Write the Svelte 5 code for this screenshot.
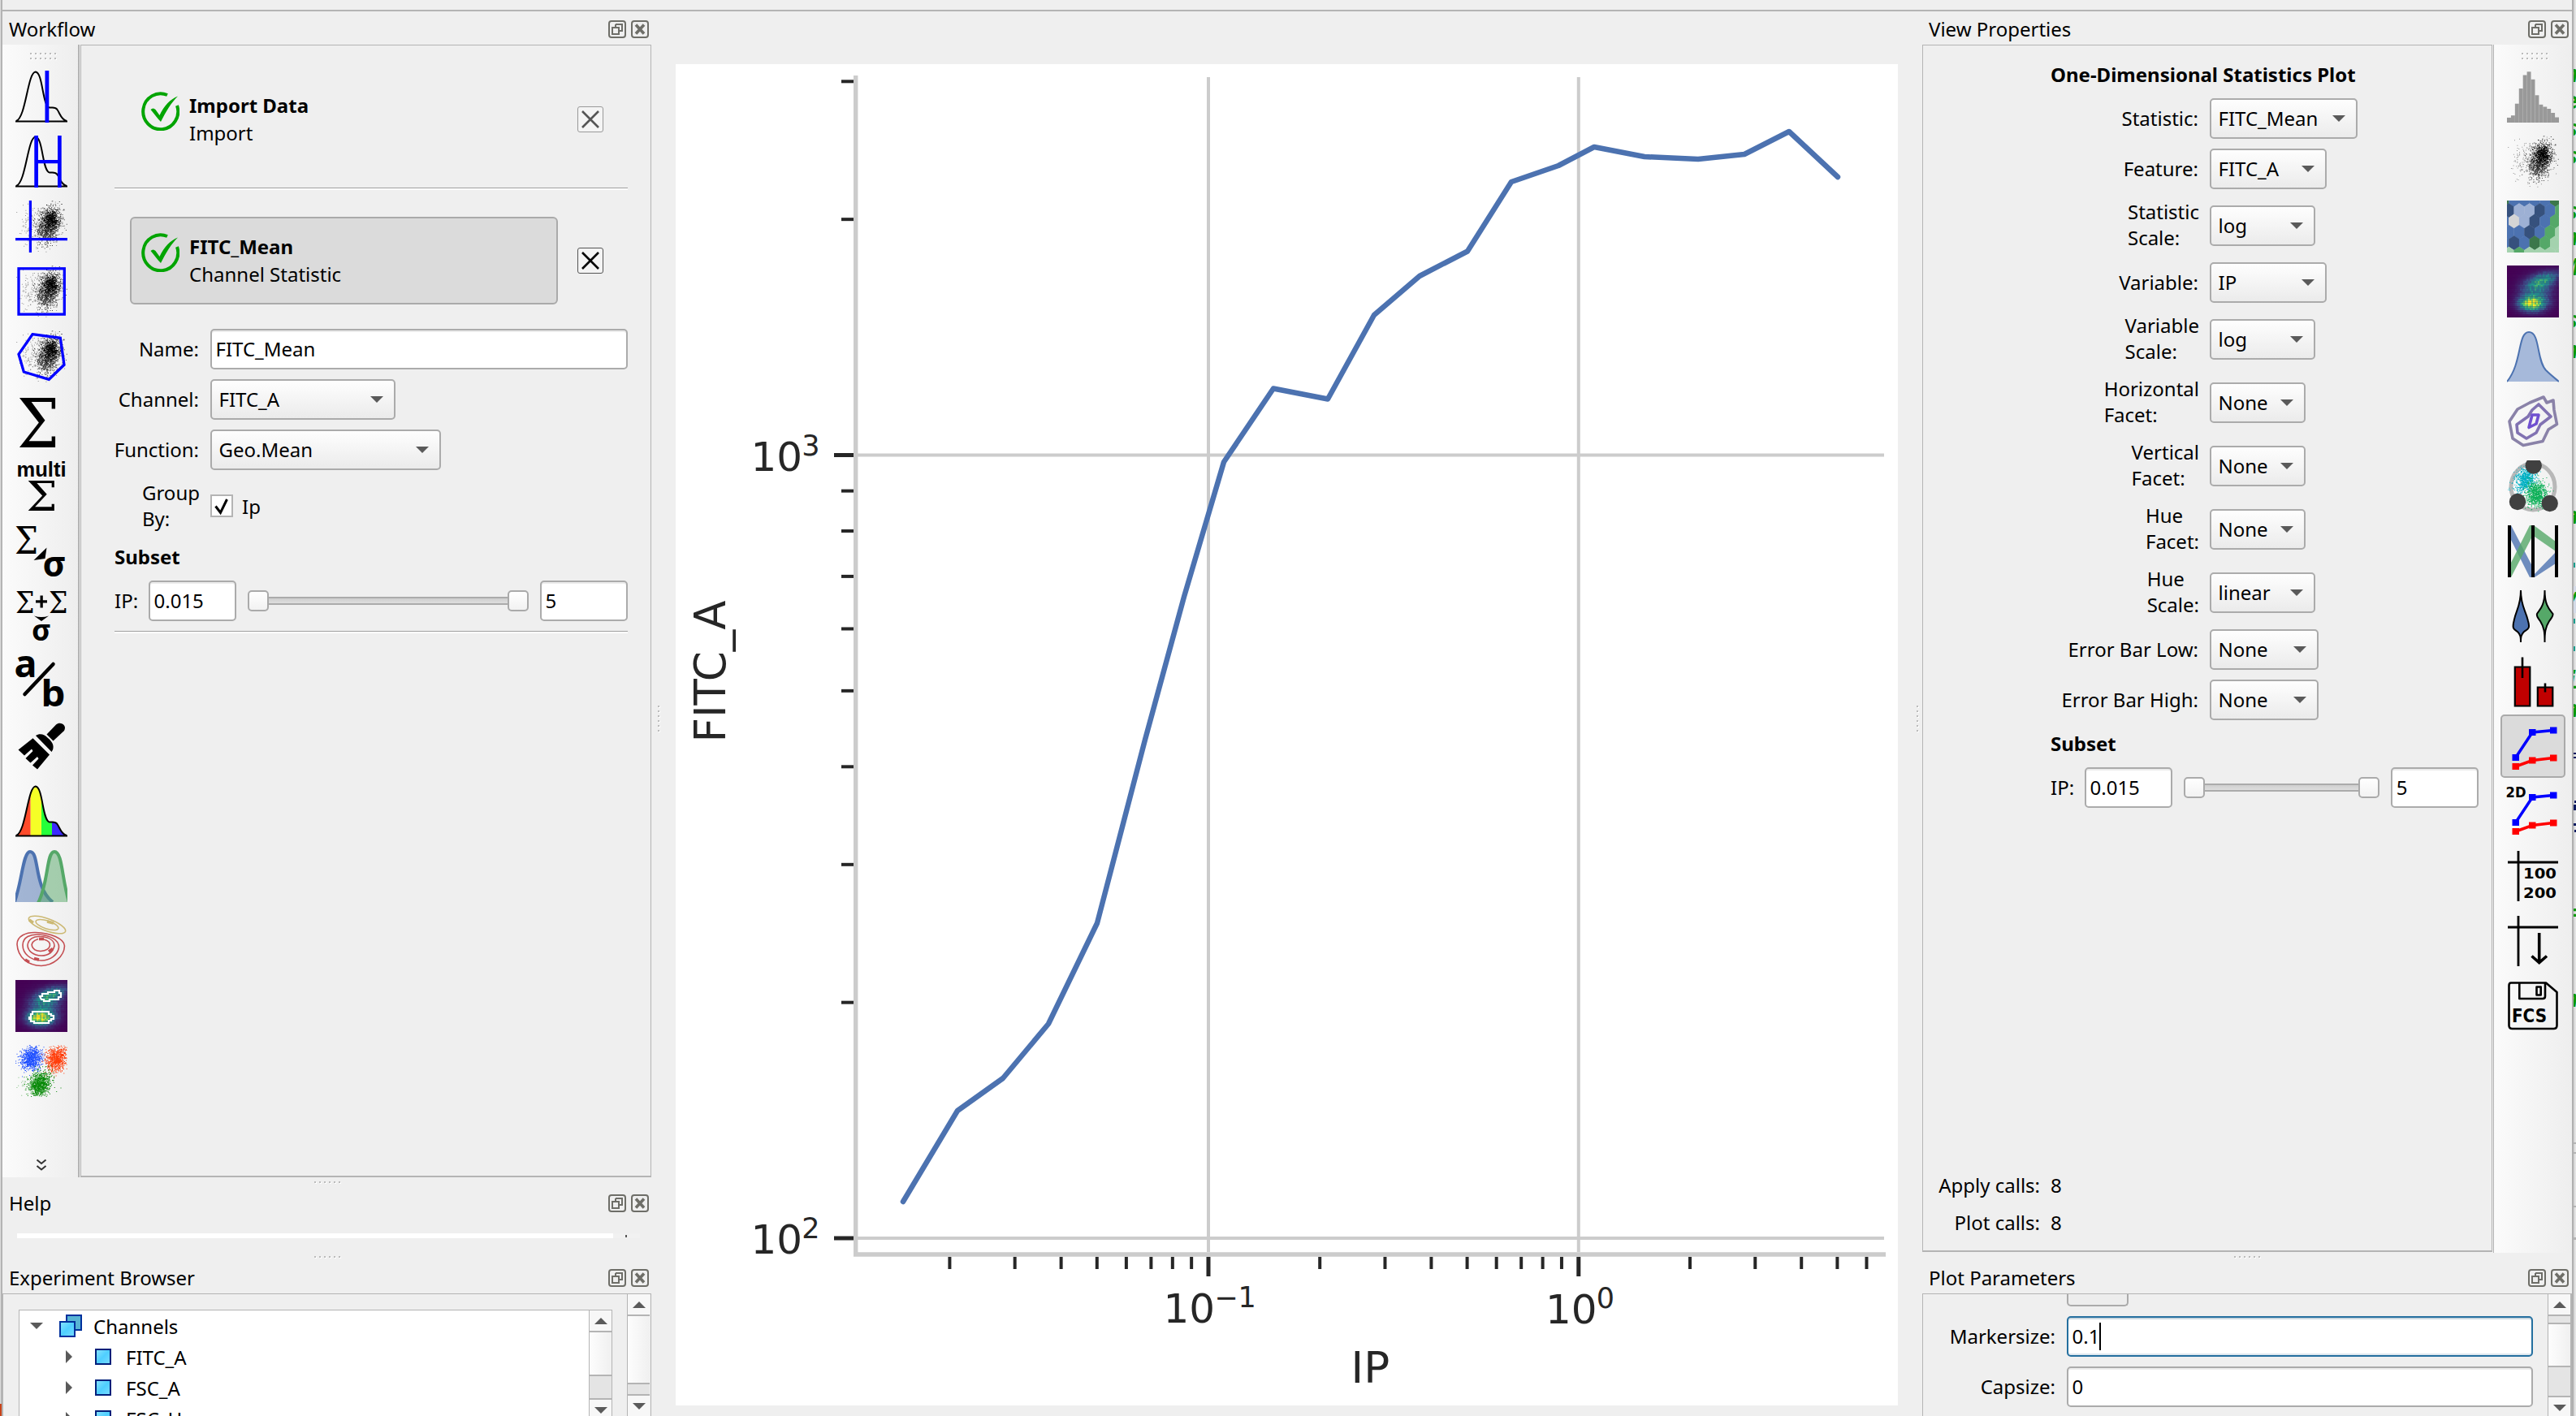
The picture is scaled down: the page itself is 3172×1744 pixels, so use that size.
<script>
  // Small deterministic generator, keeps the scatter icons stable between renders
  function rng(seed) {
    let s = seed;
    return () => {
      s = (s * 1664525 + 1013904223) % 4294967296;
      return s / 4294967296;
    };
  }

  function cloud(seed, n, cx, cy, sx, sy, tilt = 0, size = 1) {
    const r = rng(seed);
    let d = '';
    for (let i = 0; i < n; i++) {
      const m = Math.sqrt(-2 * Math.log(r() + 1e-6));
      const a = 2 * Math.PI * r();
      const v = m * Math.sin(a);
      const x = cx + m * Math.cos(a) * sx - v * tilt;
      const y = cy + v * sy;
      if (x < 0 || x > 63 || y < 0 || y > 63) continue;
      d += `M${x.toFixed(1)} ${y.toFixed(1)}h${size}v${size}h-${size}z`;
    }
    return d;
  }

  const mainCloud = cloud(7, 700, 40.5, 29, 7.2, 10.5, 1.2) + cloud(8, 180, 37, 41, 4.5, 5);
  const coreCloud = cloud(23, 420, 43, 24, 4.8, 6.5, 0.8);
  const strayCloud = cloud(51, 260, 30, 30, 14, 12, 0);

  const viridis = [[68, 1, 84], [59, 82, 139], [33, 145, 140], [94, 201, 98], [253, 231, 37]];
  function heatColor(t) {
    const p = Math.max(0, Math.min(0.999, t)) * 4;
    const i = Math.floor(p);
    const c = viridis[i].map((v, k) => Math.round(v + (viridis[i + 1][k] - v) * (p - i)));
    return `rgb(${c.join(',')})`;
  }
  const heat = [];
  const hr = rng(99);
  for (let y = 0; y < 27; y++) {
    for (let x = 0; x < 32; x++) {
      const px = x * 2 + 1, py = y * 2.4 + 1;
      const low = 0.8 * Math.exp(-(((px - 30) / 15) ** 2) - ((py - 47) / 8.5) ** 2);
      const high = 0.5 * Math.exp(-(((px - 45) / 18) ** 2) - ((py - 18 + (px - 45) * 0.3) / 9) ** 2);
      const mid = 0.36 * Math.exp(-(((px - 36) / 19) ** 2) - ((py - 34) / 18) ** 2);
      const t = (low + high + mid) * (0.78 + hr() * 0.4);
      heat.push({ x: x * 2, y: y * 2.4, fill: heatColor(t) });
    }
  }

  const hexFill = { D: '#36517d', B: '#4c72b0', L: '#9db0d4', W: '#d5d5d5', G: '#3c774a', M: '#55a868', P: '#a4d2ae' };
  const hexes = [[-1.2, -4, 'GBBBBG'], [12.2, 2.3, 'DLLDBM'], [25.6, -4, 'BWLDBM'], [38.9, 2.3, 'BBDBMP'], [52.3, -4, 'BDBGMP'], [65.7, 2.3, 'PMPPPP']]
    .flatMap(([y, x0, row]) => [...row].map((k, i) => ({ x: x0 + i * 12.7, y, fill: hexFill[k] })));

  const histTops = [57.9, 55.2, 40.7, 22, 5.5, 1.3, 10.8, 30.3, 41.8, 44.5, 47, 52, 57.5];

  const opIcons = ['threshold', 'range', 'quad', 'rect', 'polygon', 'stat', 'multistat', 'transform', 'frame', 'ratio', 'brush', 'rainbow', 'gauss', 'flow', 'density', 'kmeans'];
  const viewIcons = ['hist', 'scatter', 'hex', 'heat', 'kde', 'contour', 'radviz', 'parallel', 'violin', 'bars', 'line', 'line2d', 'table', 'export', 'fcs'];
  const lettered = ['stat', 'multistat', 'transform', 'frame', 'ratio', 'line2d', 'table', 'fcs'];

  const bell = 'M1 62C13 58 15 2 24.7 1.5C34 2 33 44 42 45.5C46 46 49 44.500 51.500 48C55 53 56 60 63 62';

  const props = [
    ['Statistic:', 'FITC_Mean', 182],
    ['Feature:', 'FITC_A', 144],
    ['Statistic\nScale:', 'log', 130],
    ['Variable:', 'IP', 144],
    ['Variable\nScale:', 'log', 130],
    ['Horizontal\nFacet:', 'None', 118],
    ['Vertical\nFacet:', 'None', 118],
    ['Hue\nFacet:', 'None', 118],
    ['Hue\nScale:', 'linear', 130],
    ['Error Bar Low:', 'None', 134],
    ['Error Bar High:', 'None', 134]
  ];

  // Log-log axes of the plot
  const xAt = v => 1943.8 + 455.8 * Math.log10(v);
  const yAt = v => 560.5 - 964.5 * (Math.log10(v) - 3);
  const xMinor = [];
  for (const e of [0.01, 0.1, 1]) for (let k = 2; k < 10; k++) if (k * e < 6.5) xMinor.push(xAt(k * e));
  const yMinor = [2, 3, 4, 5, 6, 7, 8, 9].map(k => yAt(k * 100)).concat([yAt(2000), yAt(3000)]);
  const series = [
    [1112, 1480], [1179, 1368], [1235, 1328], [1291, 1261], [1351, 1137], [1410, 911], [1458, 735], [1507, 569],
    [1568, 478.5], [1635, 491.5], [1692, 388], [1748, 340], [1807, 309.5], [1861, 224], [1919, 204], [1963, 181],
    [2025, 193], [2091, 196], [2148, 190], [2203, 162], [2263, 218]
  ];

  // Sliver of the editor window lying behind the right edge
  const behind = [
    [101, 'n'], [134, 'e'], [168, 's'], [202, 's'], [270, 's'], [302, 'n'], [339, 'M'], [404, 's'], [441, 'n'],
    [645, 'a'], [745, 'y'], [848, 'i'], [883, 'a'], [1133, '='], [1240, 'n']
  ];
</script>

{#snippet dots(n, rows)}
  <span class="dots" class:two={rows === 2}>
    {#each Array(n * rows) as _}<i></i>{/each}
  </span>
{/snippet}

{#snippet titlebar(text, cls)}
  <header class="titlebar {cls}">
    <span class="grow">{text}</span>
    <svg class="tb" viewBox="0 0 22 22"><rect x="1" y="1" width="20" height="20" rx="3" /><path d="M9 5h8v8h-3M9 8V5M5 9h8v8H5z" /></svg>
    <svg class="tb" viewBox="0 0 22 22"><rect x="1" y="1" width="20" height="20" rx="3" /><path class="thick" d="M6 5.500L16 16.500M16 5.500L6 16.500" /></svg>
  </header>
{/snippet}

{#snippet combo(text, width)}
  <div class="combo" style="width:{width}px">
    <span class="grow">{text}</span>
    <svg class="down" viewBox="0 0 16 8"><path d="M0 0h16l-8 8z" /></svg>
  </div>
{/snippet}

{#snippet subset()}
  <div class="subset">
    <span class="ip">IP:</span>
    <div class="field num">0.015</div>
    <div class="slider"><b></b><u></u><b></b></div>
    <div class="field num">5</div>
  </div>
{/snippet}

{#snippet step(title, sub, active)}
  <div class="step-row">
    <div class="step" class:active>
      <svg class="check" viewBox="0 0 48 48">
        <path class="ring" d="M33 4A21.500 22 0 1 0 45 17" />
        <path d="M12.500 22c2-2 4-2 6 0l5 7C29 17 37 9 46 5.500C38 13 31 25 25 37c-4-4-8-10-12.500-15z" />
      </svg>
      <div class="step-text"><strong>{title}</strong><span>{sub}</span></div>
    </div>
    <div class="xbtn" class:off={!active}><svg viewBox="0 0 28 28"><path d="M4 4L24 24M24 4L4 24" /></svg></div>
  </div>
{/snippet}

{#snippet scatter()}
  <path d={strayCloud} opacity=".4" /><path d={mainCloud} opacity=".7" /><path d={coreCloud} />
{/snippet}

{#snippet heatmap()}
  <rect width="64" height="64" fill="#440154" />
  {#each heat as c}<rect x={c.x} y={c.y} width="2.050" height="2.450" fill={c.fill} />{/each}
{/snippet}

{#snippet lines()}
  <g fill="none" stroke-width="3.500"><path stroke="#00f" d="M10.700 46L31.300 15L57 12.400" /><path stroke="#f00" d="M10.700 57L31.300 49.500L57 46.500" /></g>
  <path fill="#00f" d="M6.500 42h8.500v8H6.500zM27 11h8.500v8H27zM53 8.400h8.500v8H53z" />
  <path fill="#f00" d="M6.500 53h8.500v8H6.500zM27 45.500h8.500v8H27zM53 42.500h8.500v8H53z" />
{/snippet}

{#snippet icon(name)}
  <svg class="icon" class:free={lettered.includes(name)} viewBox="0 0 64 64">
    {#if name === 'threshold'}
      <path class="ink" d="{bell}M0 62.500H64" />
      <path fill="#00f" d="M36.500 0h4.800v64h-4.800z" />
    {:else if name === 'range'}
      <path class="ink" d="{bell}M0 62.500H64" />
      <path fill="#00f" d="M23.300 0H28v64h-4.700zM52 0h4.700v64H52zM25 30h30v4.300H25z" />
    {:else if name === 'quad'}
      {@render scatter()}
      <path fill="#00f" d="M16.800 0H20v64h-3.200zM0 46h64v3.300H0z" />
    {:else if name === 'rect'}
      {@render scatter()}
      <rect x="4" y="3.800" width="56.300" height="56.300" fill="none" stroke="#00f" stroke-width="3.300" />
    {:else if name === 'polygon'}
      {@render scatter()}
      <path fill="none" stroke="#00f" stroke-width="3.300" d="M21 4.700L55.300 9.300L60 42.300L41.300 60.300L10.300 51L4 29.300z" />
    {:else if name === 'stat'}
      <text class="greek" x="2" y="63.500" font-size="84" textLength="52" lengthAdjust="spacingAndGlyphs">Σ</text>
    {:else if name === 'multistat'}
      <text class="helv" x="1.500" y="20" font-size="25" textLength="61" lengthAdjust="spacingAndGlyphs">multi</text>
      <text class="greek" x="13.500" y="62" font-size="51" textLength="38" lengthAdjust="spacingAndGlyphs">Σ</text>
    {:else if name === 'transform'}
      <text class="greek" x="-1" y="35" font-size="46" textLength="29" lengthAdjust="spacingAndGlyphs">Σ</text>
      <path d="M38.500 27.500L36.500 41L22.500 43z" />
      <text class="sans" x="33.500" y="63" font-size="43" textLength="29" lengthAdjust="spacingAndGlyphs">σ</text>
    {:else if name === 'frame'}
      <text class="greek" x="0" y="28" font-size="37" textLength="23.500" lengthAdjust="spacingAndGlyphs">Σ</text>
      <text class="greek" x="41" y="28" font-size="37" textLength="23.500" lengthAdjust="spacingAndGlyphs">Σ</text>
      <path d="M25 12.300h5.500V6.500h3.300v5.800H39v3.300h-5.200v5.800h-3.300v-5.800H25zM23 31.500c6 2 12 2 18 0L32 38z" />
      <text class="sans" x="20" y="62" font-size="35" textLength="24" lengthAdjust="spacingAndGlyphs">σ</text>
    {:else if name === 'ratio'}
      <text class="sans" x="-1.500" y="26.500" font-size="46" textLength="28" lengthAdjust="spacingAndGlyphs">a</text>
      <text class="sans" x="31.500" y="62.500" font-size="45" textLength="30" lengthAdjust="spacingAndGlyphs">b</text>
      <path d="M11.500 48L46.500 11" stroke="#000" stroke-width="4.500" stroke-linecap="round" />
    {:else if name === 'brush'}
      <path d="M38.500 17.500L50 5.500C55 1 64 6 60 13L46.500 25.500z" />
      <path d="M25 19C30 15.500 36 17.500 40 22C45 26 48 31 46 36.500L44.500 39z" />
      <path d="M21.500 22.300L42 42.500L27 60.500L21 55.500L28.500 47.500L27 45L18.500 52.500L12.500 47L21.500 38L20 35.500L11 43.500L3.500 36.500z" />
    {:else if name === 'rainbow'}
      <clipPath id="bell"><path d={bell} /></clipPath>
      <g clip-path="url(#bell)">
        <rect width="18.700" height="64" fill="#ff4b2b" /><rect x="18.700" width="13.300" height="64" fill="#f5ff26" />
        <rect x="32" width="13" height="64" fill="#26ff3b" /><rect x="45" width="19" height="64" fill="#3b2bff" />
      </g>
      <path class="ink" stroke-width="2.600" d="{bell}M0 62.500H64" />
    {:else if name === 'gauss'}
      <path d="M-2 66C8 42 9 2 18 2C30 2 22 46 46 64" fill="#4c72b0" fill-opacity=".5" stroke="#4c72b0" stroke-width="4" />
      <path d="M28 65C41 40 38 2 48 2C58 2 57 36 66 64" fill="#55a868" fill-opacity=".5" stroke="#55a868" stroke-width="4" />
    {:else if name === 'flow'}
      <g fill="none" stroke="#ccb974" stroke-width="1.600"><ellipse cx="39" cy="12" rx="24" ry="7.500" transform="rotate(20 39 12)" /><ellipse cx="39" cy="12" rx="14.500" ry="5" transform="rotate(18 39 12)" /><path stroke-width="3.500" d="M17 6l5 3.500M39 8l8 2" /></g>
      <g fill="none" stroke="#c44e52" stroke-width="1.600">
        <path d="M2 36C2 26 13 21 25 21.500C43 22 60 29 60.500 38C60 51 47 62 32 62.500C15 62 3 52 2 36z" />
        <path d="M9 37C9 27 19 23.500 28 24C42 25 54 30 53.500 40C52 49 43 56 32 56C18 56 9 47 9 37z" />
        <path d="M15 37C16 29 23 26 30 26.500C41 27 48 31 48 38C46 46 40 50 32 50C22 50 15 44 15 37z" />
        <path d="M28 29.500C15 34 20 44 31 44.500C45 43 46 33 35 30" />
        <path stroke-width="3.500" d="M12 55l5 3M23 53.500l6 1.500M41 45l5-3.500M29 29.500h6" />
      </g>
    {:else if name === 'density'}
      {@render heatmap()}
      <path fill="none" stroke="#fff" stroke-width="2.200" d="M30 20h3v-3h7v-2h8v-2h6v3h2v5h-3v3H42v2H35v-2h-3zM17 46h2v-4h2v-3h20v3h3v2h3v4h-3v2h-3v3H23v-2h-4v-3h-2z" />
    {:else if name === 'kmeans'}
      <path fill="#1f4fff" d={cloud(3, 850, 19, 16, 6.5, 7, 1.2)} />
      <path fill="#ff3d0a" d={cloud(5, 850, 50.5, 17, 6, 8, 1.2)} />
      <path fill="#0a8a0a" d={cloud(9, 900, 30, 48, 6.5, 8, 0.8)} />
      <path fill="#0a8a0a" opacity=".5" d={cloud(13, 60, 16, 49, 9, 7)} />
    {:else if name === 'hist'}
      <g fill="#999">{#each histTops as t, i}<rect x={i * 4.92} y={t} width="4.950" height={64 - t} />{/each}</g>
    {:else if name === 'scatter'}
      {@render scatter()}
    {:else if name === 'hex'}
      {#each hexes as h}<path transform="translate({h.x} {h.y})" fill={h.fill} d="M0-9L6.500-4.700V4.700L0 9L-6.500 4.700V-4.700z" />{/each}
    {:else if name === 'heat'}
      {@render heatmap()}
    {:else if name === 'kde'}
      <path d="M0 63C19 40 13 2 27 2C41 2 36 36 48 49C53 54 58 58 64 63" fill="#a6b9da" stroke="#4c72b0" stroke-width="2" />
    {:else if name === 'contour'}
      <g fill="none" stroke-width="3.600" stroke-linejoin="round">
        <path stroke="#8a82a8" d="M3 32L13 17L28 9L45 2L49 9L57 6L58 18L61.500 35.500L51 42L44 56.500L20 61.500L7 53z" />
        <path stroke="#8172b2" d="M12 36L26 26L31 18L39 11L54 26L41 36L36 46L24 53L13 46z" />
        <path stroke="#7050d0" d="M31 24L39 24L36 35L27 39.500z" />
      </g>
    {:else if name === 'radviz'}
      <ellipse cx="32" cy="32.500" rx="27" ry="28.500" fill="none" stroke="#b8b8b8" stroke-width="5" />
      <path fill="#00b0c4" d={cloud(17, 800, 22.5, 23, 6, 8, 2)} />
      <path fill="#0db058" d={cloud(19, 850, 36, 42, 6.5, 8, 0)} />
      <g fill="#404040"><circle cx="32.700" cy="6.500" r="10.200" /><circle cx="13" cy="51" r="10.200" /><circle cx="52.700" cy="53" r="10.200" /></g>
    {:else if name === 'parallel'}
      <path fill="#4c72b0" opacity=".8" d="M5 0L31 50V64H28L5 18zM32 62L60 33V47L34 64z" />
      <path fill="#55a868" opacity=".8" d="M5 64L31 14V0H28L5 46zM33 0L60 20V32L34 14z" />
      <path d="M1 0h4v64H1zM30 0h4v64h-4zM59 0h4v64h-4z" />
    {:else if name === 'violin'}
      <path fill="#4c72b0" stroke="#000" stroke-width="2" d="M17 0C17 20 11 24 8.500 38C6 48 9 48 13 51C17 55 17 58 17 64C17 58 17 55 21 51C25 48 29 48 26 38C23 24 17 20 17 0z" />
      <path fill="#55a868" stroke="#000" stroke-width="2" d="M46.500 0C46.500 20 40 24 37 29C36 32 38 34 41 38C46 46 46.500 52 46.500 64C46.500 52 47 46 52 38C55 34 57 32 56.500 29C53 24 46.500 20 46.500 0z" />
    {:else if name === 'bars'}
      <path fill="#c00000" stroke="#000" stroke-width="2.200" d="M9.800 14.500h18.500v48H9.800zM37.800 39.500h18.500v23H37.800z" />
      <path stroke="#000" stroke-width="2.600" d="M19 2.500V28M47 34.500V45.500" />
    {:else if name === 'line'}
      {@render lines()}
    {:else if name === 'line2d'}
      {@render lines()}
      <text class="dj" x="-1.500" y="14.500" font-size="17.500" textLength="25" lengthAdjust="spacingAndGlyphs">2D</text>
    {:else if name === 'table'}
      <path stroke="#000" stroke-width="2.800" d="M1 15H63M14 1V63" />
      <text class="dj" x="20" y="34.500" font-size="18" textLength="41" lengthAdjust="spacingAndGlyphs">100</text>
      <text class="dj" x="20" y="58.500" font-size="18" textLength="41" lengthAdjust="spacingAndGlyphs">200</text>
    {:else if name === 'export'}
      <path stroke="#000" stroke-width="2.800" d="M1 15H63M14 1V63" />
      <path fill="none" stroke="#000" stroke-width="3.600" d="M39.700 22V58M30.500 50.500L39.700 58.500L49 50.500" />
    {:else if name === 'fcs'}
      <path fill="none" stroke="#000" stroke-width="2.600" stroke-linejoin="round" d="M5 3.500H48L61.500 15V56q0 4-4 4H6.500q-4 0-4-4V7q0-3.500 2.500-3.500zM15.300 4V23H44q3 0 3-3V4M36.500 8.500h5.200v10h-5.200z" />
      <text class="dj" x="6" y="52" font-size="22.500" textLength="43" lengthAdjust="spacingAndGlyphs">FCS</text>
    {/if}
  </svg>
{/snippet}

{#snippet arrow(up)}
  <svg class="sarrow" viewBox="0 0 16 8"><path d={up ? 'M0 8h16L8 0z' : 'M0 0h16l-8 8z'} /></svg>
{/snippet}

<div class="window">
  <div class="edge-left"><i></i></div>
  <div class="main">
    <div class="menu-edge"></div>
    <div class="body">
      <!-- Left docks -->
      <aside class="left">
        {@render titlebar('Workflow', '')}
        <div class="dock ops">
          <nav class="tools">
            <div class="handle">{@render dots(6, 2)}</div>
            {#each opIcons as name}<div class="tool">{@render icon(name)}</div>{/each}
            <svg class="more" viewBox="0 0 14 15"><path d="M1.500 1.500l5.500 4.500l5.500-4.500M1.500 9l5.500 4.500l5.500-4.500" /></svg>
          </nav>
          <section class="panel">
            {@render step('Import Data', 'Import', false)}
            <hr class="first">
            {@render step('FITC_Mean', 'Channel Statistic', true)}
            <div class="form op-form">
              <span class="label">Name:</span><div class="field">FITC_Mean</div>
              <span class="label">Channel:</span>{@render combo('FITC_A', 228)}
              <span class="label">Function:</span>{@render combo('Geo.Mean', 284)}
              <span class="label tall">{'Group\nBy:'}</span>
              <div class="checkline">
                <svg class="box" viewBox="0 0 28 28"><rect x="1" y="1" width="26" height="26" /><path d="M6.500 14.500l6 8L20.500 6" /></svg>
                <span>Ip</span>
              </div>
            </div>
            <strong class="head">Subset</strong>
            {@render subset()}
            <hr class="last">
          </section>
        </div>
        <div class="split">{@render dots(6, 1)}</div>
        {@render titlebar('Help', '')}
        <div class="help"><div class="help-page"></div><div class="help-bar"><i></i></div></div>
        <div class="split">{@render dots(6, 1)}</div>
        {@render titlebar('Experiment Browser', '')}
        <div class="browser">
          <div class="tree">
            <div class="rows">
              <div class="node root">
                <svg class="down" viewBox="0 0 16 8"><path d="M0 0h16l-8 8z" /></svg>
                <svg class="stack" viewBox="0 0 28 28">
                  <defs><linearGradient id="sky" x1="0" y1="0" x2="1" y2="1"><stop offset="0" stop-color="#8be4ff" /><stop offset=".5" stop-color="#4fcfff" /><stop offset="1" stop-color="#7adcff" /></linearGradient></defs>
                  <rect x="9" y="1" width="18" height="18" fill="#58b4d4" stroke="#00309c" stroke-width="2" />
                  <rect x="1" y="9" width="18" height="18" fill="url(#sky)" stroke="#00309c" stroke-width="2" />
                </svg>
                <span>Channels</span>
              </div>
              {#each ['FITC_A', 'FSC_A', 'FSC_H'] as ch}
                <div class="node leaf">
                  <svg class="right-tri" viewBox="0 0 8 16"><path d="M0 0v16l8-8z" /></svg>
                  <svg class="cell" viewBox="0 0 20 20"><rect x="1" y="1" width="18" height="18" fill="url(#sky)" stroke="#001f7a" stroke-width="2" /></svg>
                  <span>{ch}</span>
                </div>
              {/each}
            </div>
            <div class="scroll inner">
              <div class="s-btn">{@render arrow(true)}</div>
              <div class="s-light"></div>
              <div class="s-dark"></div>
              <div class="s-btn end">{@render arrow(false)}</div>
            </div>
          </div>
          <div class="scroll outer">
            <div class="s-btn">{@render arrow(true)}</div>
            <div class="s-light"></div>
            <div class="s-dark"></div>
            <div class="s-btn end">{@render arrow(false)}</div>
          </div>
        </div>
      </aside>

      <!-- Plot -->
      <main class="center">
        <div class="vsplit l">{@render dots(6, 1)}</div>
        <svg class="plot" viewBox="832 79 1505 1652">
          <rect x="832" y="79" width="1505" height="1652" fill="#fff" />
          <g stroke="#ccc" stroke-width="4">
            <path d="M{xAt(0.1)} 95V1542M{xAt(1)} 95V1542M1054 {yAt(1000)}H2320M1054 {yAt(100)}H2320" />
            <path stroke-width="5.400" d="M1053.700 93V1545H2322" fill="none" />
          </g>
          <g stroke="#262626" stroke-width="5">
            <path d="M{xAt(0.1)} 1548V1572M{xAt(1)} 1548V1572M1027 {yAt(1000)}H1051M1027 {yAt(100)}H1051" />
          </g>
          <g stroke="#262626" stroke-width="4">
            {#each xMinor as x}<path d="M{x} 1548V1563" />{/each}
            {#each yMinor as y}<path d="M1036 {y}H1051" />{/each}
          </g>
          <polyline points={series.map(p => p.join()).join(' ')} fill="none" stroke="#4c72b0" stroke-width="6.500" stroke-linejoin="round" stroke-linecap="round" />
          <g class="ticks" font-size="50">
            <text x="924.500" y="580">10<tspan dy="-19" dx="-1" font-size="35">3</tspan></text>
            <text x="924.500" y="1543.700">10<tspan dy="-19" dx="-1" font-size="35">2</tspan></text>
            <text x="1432.500" y="1628.700">10<tspan dy="-19" dx="-1" font-size="35">−1</tspan></text>
            <text x="1903" y="1629.700">10<tspan dy="-19" dx="-1" font-size="35">0</tspan></text>
            <text x="1663.500" y="1702.500" font-size="53">IP</text>
            <text transform="translate(892.500 827) rotate(-90)" text-anchor="middle" font-size="53">FITC_A</text>
          </g>
        </svg>
        <div class="vsplit r">{@render dots(6, 1)}</div>
      </main>

      <!-- Right docks -->
      <aside class="right">
        {@render titlebar('View Properties', 'r')}
        <div class="dock views">
          <section class="panel">
            <strong class="title">One-Dimensional Statistics Plot</strong>
            <div class="form view-form">
              {#each props as [label, value, width]}
                <span class="label" class:tall={label.includes('\n')}>{label}</span>
                {@render combo(value, width)}
              {/each}
            </div>
            <strong class="head">Subset</strong>
            {@render subset()}
            <div class="calls">
              <span>Apply calls:</span><span>8</span>
              <span>Plot calls:</span><span>8</span>
            </div>
          </section>
          <nav class="tools">
            <div class="handle">{@render dots(6, 2)}</div>
            {#each viewIcons as name}<div class="tool" class:sel={name === 'line'}>{@render icon(name)}</div>{/each}
          </nav>
        </div>
        <div class="split">{@render dots(6, 1)}</div>
        {@render titlebar('Plot Parameters', 'r')}
        <div class="params">
          <div class="param-form">
            <span></span><div class="stub"></div>
            <span class="label">Markersize:</span><div class="field focus">0.1<i class="caret"></i></div>
            <span class="label">Capsize:</span><div class="field">0</div>
          </div>
          <div class="scroll pscroll">
            <div class="s-btn">{@render arrow(true)}</div>
            <div class="s-dark gap"></div>
            <div class="s-light"></div>
            <div class="s-dark"></div>
            <div class="s-btn end">{@render arrow(false)}</div>
          </div>
        </div>
      </aside>
    </div>
  </div>
  <div class="edge-right">
    <svg viewBox="0 0 4 1744">
      <path fill="#d5dbe8" d="M0 722h4v33H0z" />
      <g class="code">{#each behind as [y, ch]}<text x="-11" {y}>{ch}</text>{/each}</g>
      <path fill="#1a9c8c" d="M0 693h2v6H0zM0 762h2v6H0zM0 796h2v6H0z" />
      <path fill="#0a1a60" d="M0 927h4v2H0zM0 932h4v2H0zM1 986h3v3H1zM0 991h3v7H0zM0 1014h3v3H0zM1 1022h3v3H1z" />
      <path fill="#b4b4b4" d="M0 1407h4v2H0zM0 1419h4v2H0zM0 1485h4v2H0zM0 1524h4v3H0z" />
    </svg>
  </div>
</div>

<style>
  :global(body) { margin: 0; background: #efefef; }

  .window {
    position: relative;
    display: flex;
    width: 3172px;
    height: 1744px;
    overflow: hidden;
    background: #efefef;
    color: #000;
    font-family: "Noto Sans", sans-serif;
    font-size: 24px;
    line-height: 33px;
  }
  .window :global(svg) { display: block; flex: none; }
  .grow { flex: 1; }

  .edge-left {
    box-sizing: border-box;
    width: 3px;
    display: flex;
    align-items: flex-end;
    background: linear-gradient(90deg, #dcdcdc 1px, #b4b4b4 1px);
  }
  .edge-left i { width: 2px; height: 15px; background: #c8441a; }
  .edge-right {
    box-sizing: border-box;
    width: 5px;
    border-left: 2px solid #b0b0b0;
    background: linear-gradient(90deg, #cfcfcf, #ececec);
    overflow: hidden;
  }
  .edge-right svg { width: 4px; height: 1744px; overflow: hidden; }
  .code { font: italic bold 28px "DejaVu Sans Mono", monospace; fill: #0a9a0a; }

  .main { width: 3164px; display: flex; flex-direction: column; }
  .menu-edge { height: 12px; border-bottom: 2px solid #b4b4b4; }
  .body { flex: 1; display: flex; min-height: 0; }

  /* Docks */
  .left { width: 800px; display: flex; flex-direction: column; }
  .right { width: 801px; display: flex; flex-direction: column; }
  .titlebar {
    box-sizing: border-box;
    height: 41px;
    padding: 3px 4px 0 8px;
    display: flex;
    align-items: center;
    gap: 6px;
    flex: none;
  }
  .titlebar span { padding-bottom: 2px; }
  .titlebar.r { padding-left: 9px; }
  .tb { width: 22px; height: 22px; fill: none; stroke: #6e6e68; stroke-width: 2; }
  .tb .thick { stroke-width: 3.6; }
  .dock { display: flex; flex: none; }
  .ops { height: 1396px; }
  .views { height: 1488px; padding-left: 1px; }
  .panel {
    box-sizing: border-box;
    display: flex;
    flex-direction: column;
    border: 1px solid #b4b4b4;
    border-bottom-width: 2px;
  }
  .ops .panel { width: 703px; height: 1395px; margin-left: 1px; padding: 37px 28px 0 41px; }
  .views .panel { width: 703px; height: 1487px; padding: 19px 16px 17px 157px; }

  .tools {
    box-sizing: border-box;
    display: flex;
    flex-direction: column;
    background: linear-gradient(90deg, #fbfbfb, #eee);
  }
  .ops .tools { width: 95px; height: 1395px; border-right: 2px solid #b4b4b4; padding-left: 8px; }
  .views .tools { width: 97px; border-left: 1px solid #b4b4b4; margin-left: 1px; padding-left: 8px; }
  .handle { height: 24px; box-sizing: border-box; padding: 10px 0 0 26px; }
  .dots { display: flex; gap: 4px; }
  .dots i { width: 2px; height: 2px; background: #bbb; box-shadow: 1px 1px 0 #fff; }
  .dots.two { width: 34px; flex-wrap: wrap; }
  .tool { box-sizing: border-box; width: 80px; height: 80px; padding: 8px; }
  .tool.sel {
    height: 78px;
    margin: 1px 0;
    padding: 5px 6px;
    border: 2px solid #aaa;
    border-radius: 5px;
    background: #dbdbdb;
  }
  .icon { width: 64px; height: 64px; overflow: hidden; }
  .icon.free { overflow: visible; }
  .ink { fill: none; stroke: #000; stroke-width: 2; }
  .greek { font-family: "DejaVu Serif", serif; }
  .helv { font-family: "Liberation Sans", sans-serif; font-weight: bold; }
  .sans { font-family: "Noto Sans", sans-serif; font-weight: bold; }
  .dj { font-family: "DejaVu Sans", sans-serif; font-weight: bold; }
  .more { width: 14px; height: 15px; margin: 68px 0 0 33px; fill: none; stroke: #333; stroke-width: 2; }

  .split { height: 9px; flex: none; display: flex; justify-content: center; padding-top: 4px; box-sizing: border-box; }

  /* Workflow */
  .step-row { display: flex; align-items: center; padding-left: 19px; }
  .step {
    box-sizing: border-box;
    width: 527px;
    height: 108px;
    display: flex;
    gap: 12px;
    padding: 18px 11px;
    border: 2px solid transparent;
    border-radius: 6px;
  }
  .step.active { background: #dbdbdb; border-color: #aaa; }
  .check { width: 48px; height: 48px; fill: #00a400; }
  .check .ring { fill: none; stroke: #00a400; stroke-width: 4; }
  .step-text { display: flex; flex-direction: column; line-height: 34px; }
  .xbtn {
    box-sizing: border-box;
    width: 32px;
    height: 32px;
    margin-left: 24px;
    border: 1px solid #555;
    border-radius: 3px;
    padding: 1px;
    background: #f4f4f4;
  }
  .xbtn svg { width: 28px; height: 28px; stroke: #000; stroke-width: 2.6; }
  .xbtn.off { border-color: #999; }
  .xbtn.off svg { stroke: #555; }
  hr { width: 100%; height: 2px; margin: 0; border: 0; border-top: 1px solid #a0a0a0; background: #fff; flex: none; }
  hr.first { margin: 30px 0 33px; }
  hr.last { margin-top: 12px; }

  .form { display: grid; gap: 12px; align-items: center; }
  .op-form { grid-template-columns: 106px 1fr; margin-top: 30px; }
  .view-form { grid-template-columns: 184px 1fr; margin-top: 12px; }
  .label { justify-self: end; padding: 0 2px 2px 0; }
  .label.tall { height: 64px; padding: 0 1px 2px 0; line-height: 32px; white-space: pre; }
  .field {
    box-sizing: border-box;
    height: 50px;
    padding: 5.5px 4.5px;
    border: 2px solid #ababab;
    border-radius: 5px;
    background: #fff;
    box-shadow: inset 0 2px 0 #ececec;
  }
  .combo {
    box-sizing: border-box;
    height: 50px;
    display: flex;
    align-items: center;
    padding: 0 13px 0 8.5px;
    border: 2px solid #ababab;
    border-radius: 5px;
    background: linear-gradient(#fefefe, #ebebeb);
  }
  .combo span { padding-bottom: 2px; }
  .down { width: 16px; height: 8px; fill: #5a5a5a; }
  .checkline { display: flex; align-items: center; gap: 11px; padding-bottom: 2px; }
  .box { width: 28px; height: 28px; }
  .box rect { fill: #fff; stroke: #b4b4b4; stroke-width: 2; }
  .box path { fill: none; stroke: #000; stroke-width: 3; }
  .head { height: 34px; margin-top: 12px; }
  .subset { display: flex; align-items: center; margin-top: 12px; }
  .ip { width: 42px; padding-bottom: 2px; }
  .num { width: 108px; }
  .slider { flex: 1; margin: 0 14px; display: flex; align-items: center; }
  .slider b {
    box-sizing: border-box;
    width: 26px;
    height: 26px;
    border: 2px solid #aaa;
    border-radius: 5px;
    background: linear-gradient(#fff, #f2f2f2);
  }
  .slider u {
    box-sizing: border-box;
    flex: 1;
    height: 10px;
    border: solid #ababab;
    border-width: 2px 0;
    background: linear-gradient(#cfcfcf, #dedede);
  }

  /* Help and browser */
  .help { height: 42px; box-sizing: border-box; padding: 18px 15px 0 18px; display: flex; flex: none; }
  .help-page { width: 734px; height: 6px; background: #fff; }
  .help-bar { width: 33px; height: 6px; padding-left: 15px; box-sizing: border-box; background: #f1f1f1; }
  .help-bar i { display: block; width: 2px; height: 3px; margin-top: 2px; background: #555; }
  .browser {
    flex: 1;
    min-height: 0;
    display: flex;
    width: 799px;
    box-sizing: border-box;
    border: solid #b4b4b4;
    border-width: 1px 1px 0;
    overflow: hidden;
  }
  .tree {
    box-sizing: border-box;
    width: 731px;
    margin: 19px 18px 0 19px;
    display: flex;
    border: 1px solid #b4b4b4;
    border-bottom: 0;
    background: #fff;
    overflow: hidden;
  }
  .rows { flex: 1; }
  .node { height: 38px; display: flex; align-items: center; }
  .root { padding-left: 13px; gap: 20px; }
  .root span { margin-left: -6px; }
  .stack { width: 28px; height: 28px; }
  .leaf { padding-left: 57px; }
  .right-tri { width: 8px; height: 16px; fill: #5a5a5a; margin-right: 28px; }
  .cell { width: 20px; height: 20px; margin-right: 18px; }
  .scroll { box-sizing: border-box; width: 28px; flex: none; display: flex; flex-direction: column; border-left: 1px solid #b4b4b4; }
  .s-btn { box-sizing: border-box; height: 27px; display: flex; justify-content: center; align-items: center; background: #f7f7f7; border-bottom: 2px solid #b4b4b4; flex: none; }
  .s-btn.end { border: 0; border-top: 2px solid #b4b4b4; }
  .sarrow { width: 16px; height: 8px; fill: #5a5a5a; }
  .s-light { background: linear-gradient(90deg, #fdfdfd, #f0f0f0); border-bottom: 2px solid #b4b4b4; box-sizing: border-box; flex: none; }
  .s-dark { background: #e4e4e4; flex: none; }
  .inner .s-light { height: 54px; }
  .inner .s-dark { height: 27px; }
  .outer .s-light { height: 84px; }
  .outer .s-dark { height: 12px; }
  .outer .s-btn.end { height: 27px; }

  /* Plot */
  .center { flex: 1; display: flex; }
  .vsplit { display: flex; flex-direction: column; box-sizing: border-box; padding-top: 855px; }
  .vsplit.l { width: 29px; padding-left: 7px; }
  .vsplit.r { flex: 1; padding-left: 23px; }
  .vsplit .dots { flex-direction: column; }
  .plot { width: 1505px; height: 1652px; margin-top: 65px; }
  .ticks { font-family: "DejaVu Sans", sans-serif; fill: #262626; }

  /* View properties */
  .title { height: 34px; flex: none; white-space: nowrap; }
  .calls {
    display: grid;
    grid-template-columns: 127px 1fr;
    gap: 12px 11px;
    margin: auto 0 0 -138px;
    line-height: 34px;
  }
  .calls span:nth-child(odd) { text-align: right; padding-right: 2px; }

  .params {
    flex: 1;
    min-height: 0;
    margin-left: 1px;
    display: flex;
    justify-content: space-between;
    border: solid #b4b4b4;
    border-width: 1px 2px 0 1px;
    overflow: hidden;
  }
  .param-form {
    display: grid;
    grid-template-columns: 165px 574px;
    grid-auto-rows: 50px;
    grid-template-rows: 15px;
    gap: 12px;
    align-items: center;
  }
  .stub {
    box-sizing: border-box;
    width: 76px;
    height: 15px;
    border: 2px solid #ababab;
    border-top: 0;
    border-radius: 0 0 5px 5px;
    background: #ededed;
  }
  .focus { display: flex; border-color: #246f9f; box-shadow: inset 0 2px 0 #ccd8e0, inset 0 -2px 0 #dfe8ef; }
  .caret { width: 2px; height: 34px; margin: 0; background: #000; }
  .pscroll .gap { height: 10px; border-bottom: 2px solid #b4b4b4; box-sizing: border-box; }
  .pscroll .s-light { height: 53px; }
  .pscroll .s-dark:not(.gap) { height: 35px; }
</style>
